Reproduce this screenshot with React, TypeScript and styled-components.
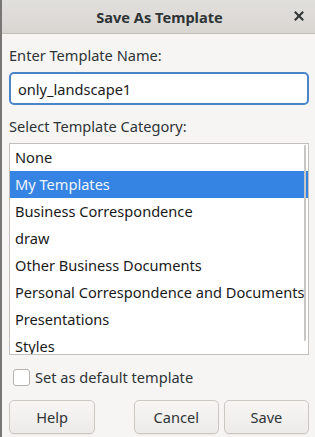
import React, { useState } from "react"
import styled, { createGlobalStyle } from "styled-components"

const categories = [
    "None",
    "My Templates",
    "Business Correspondence",
    "draw",
    "Other Business Documents",
    "Personal Correspondence and Documents",
    "Presentations",
    "Styles",
]

const GlobalStyle = createGlobalStyle`
    html, body {
        margin: 0;
        padding: 0;
        background: #f6f5f4;
    }
    body {
        font-family: "Noto Sans", "Open Sans", sans-serif;
        color: #2e3436;
    }
`

const App = () => {
    const [name, setName] = useState<string>("only_landscape1")
    const [selected, setSelected] = useState<number>(1)
    const [isDefault, setIsDefault] = useState<boolean>(false)

    return (
        <>
            <GlobalStyle />
            <Dialog>
                <TitleBar>
                    <Title>Save As Template</Title>
                    <CloseButton aria-label="Close">
                        <svg width="10" height="10" viewBox="0 0 10 10">
                            <path d="M1.5 1.5 L8.5 8.5 M8.5 1.5 L1.5 8.5" stroke="#2e3436" strokeWidth="2" strokeLinecap="square" />
                        </svg>
                    </CloseButton>
                </TitleBar>
                <Body>
                    <Label>Enter Template Name:</Label>
                    <NameInput value={name} onChange={(e) => setName(e.target.value)} />
                    <Label $top={12}>Select Template Category:</Label>
                    <ListBox>
                        {categories.map((c, i) => (
                            <ListItem key={c} $selected={i === selected} onClick={() => setSelected(i)}>
                                {c}
                            </ListItem>
                        ))}
                        <ScrollIndicator />
                    </ListBox>
                    <CheckRow onClick={() => setIsDefault(!isDefault)}>
                        <CheckBox $checked={isDefault} />
                        <span>Set as default template</span>
                    </CheckRow>
                    <ButtonRow>
                        <Button $width={87}>Help</Button>
                        <Spacer />
                        <Button $width={86}>Cancel</Button>
                        <Button $width={86}>Save</Button>
                    </ButtonRow>
                </Body>
            </Dialog>
        </>
    )
}

const Dialog = styled.div`
    width: 315px;
    height: 437px;
    box-sizing: border-box;
    border-left: 2px solid #777674;
    background: #f6f5f4;
    display: flex;
    flex-direction: column;
    overflow: hidden;
`

const TitleBar = styled.div`
    height: 34px;
    flex: none;
    box-sizing: border-box;
    border-bottom: 1px solid #c0bdb8;
    background: linear-gradient(#e1dfdc, #d9d6d2);
    display: flex;
    align-items: center;
    justify-content: center;
    position: relative;
`

const Title = styled.div`
    font-weight: bold;
    font-size: 14.6px;
    color: #2e3436;
    margin-left: 2px;
`

const CloseButton = styled.div`
    position: absolute;
    right: 11px;
    top: 11px;
    width: 10px;
    height: 10px;
    display: flex;
`

const Body = styled.div`
    padding: 9px 6px 0 7px;
    display: flex;
    flex-direction: column;
`

const Label = styled.div<{ $top?: number }>`
    font-size: 14.6px;
    line-height: 18px;
    margin-top: ${(p) => p.$top || 3}px;
    margin-bottom: 8px;
    color: #2e3436;
`

const NameInput = styled.input`
    height: 33px;
    box-sizing: border-box;
    border: 2px solid #4a85c8;
    border-radius: 5px;
    background: #fff;
    font-family: "Noto Sans", "Open Sans", sans-serif;
    font-size: 14.6px;
    color: #1a1a1a;
    padding: 0 7px;
    outline: none;
`

const ListBox = styled.div`
    height: 212px;
    box-sizing: border-box;
    border: 1px solid #c3c0bc;
    background: #fff;
    overflow: hidden;
    position: relative;
`

const ListItem = styled.div<{ $selected: boolean }>`
    height: 27px;
    line-height: 27px;
    padding-left: 5px;
    font-size: 14.6px;
    white-space: nowrap;
    background: ${(p) => (p.$selected ? "#3584e4" : "transparent")};
    color: ${(p) => (p.$selected ? "#eef4fc" : "#1a1a1a")};
    cursor: default;
`

const ScrollIndicator = styled.div`
    position: absolute;
    right: 2px;
    top: 1px;
    width: 2px;
    height: 196px;
    background: #c8c6c3;
    border-radius: 1px;
`

const CheckRow = styled.div`
    display: flex;
    align-items: center;
    gap: 5px;
    margin-top: 12px;
    margin-left: 4px;
    font-size: 14.6px;
    color: #2e3436;
`

const CheckBox = styled.div<{ $checked: boolean }>`
    width: 15px;
    height: 15px;
    border: 1px solid #b6b2ad;
    border-radius: 3px;
    background: ${(p) => (p.$checked ? "#3584e4" : "#fff")};
`

const ButtonRow = styled.div`
    display: flex;
    gap: 5px;
    margin-top: 13px;
`

const Spacer = styled.div`
    width: 29px;
`

const Button = styled.button<{ $width: number }>`
    width: ${(p) => p.$width}px;
    height: 34px;
    border: 1px solid #cdc7c2;
    border-radius: 5px;
    background: linear-gradient(#f7f6f5, #edebe9);
    font-family: "Noto Sans", "Open Sans", sans-serif;
    font-size: 14.6px;
    color: #2e3436;
    box-shadow: 0 1px 1px rgba(0, 0, 0, 0.06);
`

export default App
